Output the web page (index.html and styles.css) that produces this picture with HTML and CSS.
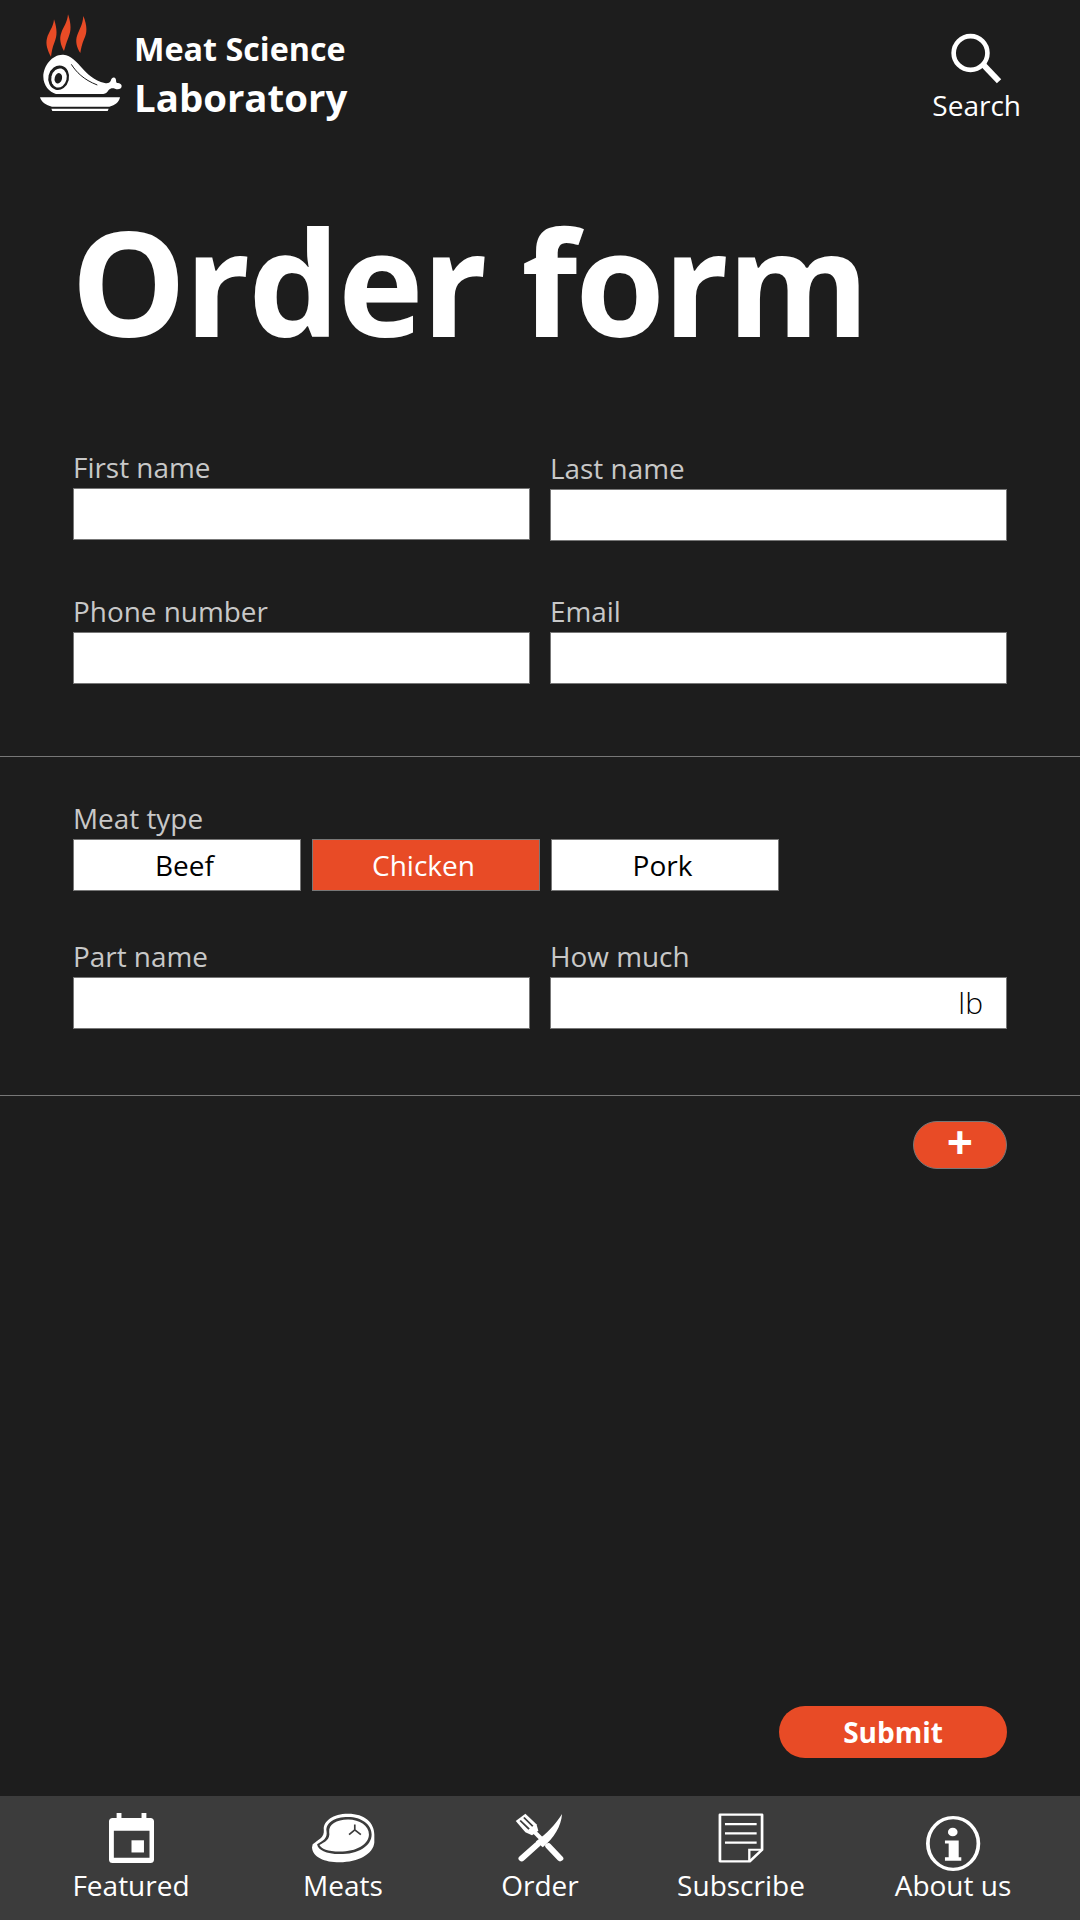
FILE: index.html
```html
<!DOCTYPE html>
<html lang="en">
<head>
  <meta charset="UTF-8" />
  <meta name="viewport" content="width=device-width, initial-scale=1.0"/>
  <title>Order form</title>
  <link rel="stylesheet" href="styles.css">
</head>
<body>
  <header class="topbar">
    <div class="brand">
      <svg class="logo" viewBox="120 36 255 300" aria-hidden="true">
        <path fill="#e84b26" d="M162 55C172 85 172 105 163 125 157 140 155 152 153 167 143 150 136 130 141 112 146 92 160 80 162 55Z"/>
        <path fill="#e84b26" d="M204 40C214 70 214 90 205 110 199 124 196 136 192 150 182 132 177 112 184 95 190 78 202 65 204 40Z"/>
        <path fill="#e84b26" d="M250 45C262 75 262 95 252 115 246 130 243 142 241 156 230 140 225 120 232 102 238 85 248 72 250 45Z"/>
        <path fill="#fff" d="M190 161c24 2 40 22 56 40 16 18 36 38 68 45 9 2 14 0 18-6 1-7 7-13 12-10 6 3 3 12 6 15 5 1 15 2 15 10 0 9-11 12-20 8-8-3-14-1-19 4-4 7-8 11-16 12H168c-20-6-38-26-38-52 0-34 28-68 60-66z"/>
        <path fill="none" stroke="#1d1d1d" stroke-width="3" d="M214 190c14 22 36 46 78 62"/>
        <ellipse cx="176" cy="230" rx="31" ry="37" fill="#1d1d1d" transform="rotate(14 176 230)"/>
        <ellipse cx="177" cy="231" rx="23" ry="29" fill="#fff" transform="rotate(14 177 231)"/>
        <ellipse cx="175" cy="232" rx="11" ry="16" fill="#1d1d1d" transform="rotate(14 175 232)"/>
        <path fill="#fff" d="M120 289h240c-3 14-14 24-32 28H156c-18-4-32-14-36-28zM154 323h172l-3 7H157z"/>
      </svg>
      <div class="brand-text">
        <span class="brand-top">Meat Science</span>
        <span class="brand-bottom">Laboratory</span>
      </div>
    </div>
    <div class="search">
      <svg class="search-icon" viewBox="214 100 154 156" aria-hidden="true">
        <circle cx="273" cy="160" r="51" fill="none" stroke="#fff" stroke-width="14"/>
        <path d="M313 197l46 48" fill="none" stroke="#fff" stroke-width="18"/>
      </svg>
      <span>Search</span>
    </div>
  </header>

  <h1 class="page-title">Order form</h1>

  <section class="section">
    <div class="row row-first">
      <div class="field"><label>First name</label><input type="text"></div>
      <div class="field"><label>Last name</label><input type="text"></div>
    </div>
    <div class="row">
      <div class="field"><label>Phone number</label><input type="text"></div>
      <div class="field"><label>Email</label><input type="text"></div>
    </div>
  </section>

  <section class="section section-meat">
    <div class="field">
      <label>Meat type</label>
      <div class="types">
        <button class="type">Beef</button>
        <button class="type active">Chicken</button>
        <button class="type">Pork</button>
      </div>
    </div>
    <div class="row">
      <div class="field"><label>Part name</label><input type="text"></div>
      <div class="field">
        <label>How much</label>
        <div class="amount"><input type="text"><span class="unit">lb</span></div>
      </div>
    </div>
  </section>

  <div class="add-line"><button class="add-btn">+</button></div>

  <div class="submit-line"><button class="submit-btn">Submit</button></div>

  <nav class="tabbar">
    <a class="tab">
      <svg class="tab-icon icon-featured" viewBox="311 98 130 152" preserveAspectRatio="none" aria-hidden="true">
        <path fill="#fff" fill-rule="evenodd" d="M333 98h14v15h58V98h14v15h12c6 0 10 4 10 10v117c0 6-4 10-10 10H321c-6 0-10-4-10-10V123c0-6 4-10 10-10h12zM325 152v82h103v-82z"/>
        <rect x="376" y="181" width="36" height="37" fill="#fff"/>
      </svg>
      <span>Featured</span>
    </a>
    <a class="tab">
      <svg class="tab-icon icon-meats" viewBox="900 100 190 152" preserveAspectRatio="none" aria-hidden="true">
        <path fill="#fff" d="M905 195C925 178 940 175 938 150 936 125 965 102 1010 102 1060 102 1088 130 1088 165V190C1085 225 1040 250 985 250 940 250 905 235 903 205Z"/>
        <path fill="#3c3c3c" d="M918 195C935 185 950 178 946 155 943 130 970 112 1010 112 1050 112 1080 135 1080 165 1080 200 1040 225 985 225 945 225 920 212 918 195Z"/>
        <path fill="#fff" d="M925 197C940 190 958 180 954 158 952 135 975 120 1010 120 1045 120 1072 140 1072 165 1072 195 1035 217 985 217 950 217 930 208 925 197Z"/>
        <path fill="none" stroke="#3c3c3c" stroke-width="5" d="M1030 135V151M1030 151L1013 166M1030 151L1048 166"/>
      </svg>
      <span>Meats</span>
    </a>
    <a class="tab">
      <svg class="tab-icon icon-order" viewBox="90 100 135 155" preserveAspectRatio="none" aria-hidden="true">
        <path fill="#fff" d="M92 125L118 102 148 135 153 155 136 169 118 160Z"/>
        <path fill="none" stroke="#3c3c3c" stroke-width="5" d="M104 123L128 150M114 114L138 141"/>
        <path fill="none" stroke="#fff" stroke-width="12" d="M142 158L168 188"/>
        <path fill="none" stroke="#fff" stroke-width="17" stroke-linecap="round" d="M180 202L212 241"/>
        <path fill="#fff" d="M217 103C215 140 195 178 165 206L146 188C175 165 200 135 217 103Z"/>
        <path fill="none" stroke="#fff" stroke-width="17" stroke-linecap="round" d="M150 198L108 241"/>
      </svg>
      <span>Order</span>
    </a>
    <a class="tab">
      <svg class="tab-icon icon-subscribe" viewBox="625 100 119 152" preserveAspectRatio="none" aria-hidden="true">
        <path fill="none" stroke="#fff" stroke-width="7" stroke-linejoin="round" d="M630 105H739V212L707 247H630Z"/>
        <path fill="none" stroke="#fff" stroke-width="7" d="M643 134H725M643 162H725M643 190H725"/>
        <path fill="none" stroke="#fff" stroke-width="6" d="M739 212H706V247"/>
      </svg>
      <span>Subscribe</span>
    </a>
    <a class="tab">
      <svg class="tab-icon icon-about" viewBox="1162 106 148 168" preserveAspectRatio="none" aria-hidden="true">
        <ellipse cx="1235" cy="190" rx="68" ry="79" fill="none" stroke="#fff" stroke-width="10"/>
        <circle cx="1234" cy="155" r="13" fill="#fff"/>
        <path fill="#fff" d="M1213 181H1250V232H1257V243H1213V232H1223V190H1213Z"/>
      </svg>
      <span>About us</span>
    </a>
  </nav>
</body>
</html>
```

FILE: styles.css
```css
* { box-sizing: border-box; margin: 0; padding: 0; }

body {
  font-family: "Open Sans", sans-serif;
  background: #1d1d1d;
  color: #fff;
  height: 1920px;
  display: flex;
  flex-direction: column;
  overflow: hidden;
}

.topbar {
  height: 130px;
  display: flex;
  justify-content: space-between;
  padding: 13px 59px 0 40px;
}

.brand {
  display: flex;
  gap: 9px;
}

.logo {
  width: 85px;
  height: 100px;
}

.brand-text {
  display: flex;
  flex-direction: column;
  font-weight: 700;
  padding-top: 14px;
}

.brand-top {
  font-size: 32.3px;
  line-height: 42px;
}

.brand-bottom {
  font-size: 38.4px;
  line-height: 57px;
}

.search {
  display: flex;
  flex-direction: column;
  align-items: center;
  font-size: 28px;
  padding-top: 20px;
  line-height: 36px;
}

.search-icon {
  width: 51px;
  height: 52px;
  margin-bottom: 2px;
}

.page-title {
  font-size: 145px;
  font-weight: 700;
  line-height: 200px;
  padding-left: 71px;
  margin-top: 51px;
  letter-spacing: -2px;
}

.section {
  padding: 72px 73px 0;
  height: 376px;
  border-bottom: 1px solid #777;
}

.section-meat {
  padding-top: 47px;
  height: 339px;
}

.row {
  display: grid;
  grid-template-columns: 457px 457px;
  gap: 20px;
  margin-bottom: 57px;
}

.row-first {
  margin-bottom: 56px;
}

.row-first .field:last-child {
  margin-top: 1px;
}

.field label {
  display: block;
  font-size: 27.9px;
  line-height: 28px;
  padding-bottom: 7px;
  color: #c8c8c8;
}

.field input {
  display: block;
  width: 100%;
  height: 52px;
  border: 1px solid #777;
  background: #fff;
  outline: none;
}

.types {
  display: flex;
  gap: 11px;
  margin-bottom: 51px;
}

.type {
  width: 228px;
  height: 52px;
  border: 1px solid #777;
  background: #fff;
  color: #000;
  font-family: inherit;
  font-size: 28px;
  padding-right: 5px;
}

.type.active {
  background: #e84b26;
  color: #fff;
}

.amount {
  position: relative;
}

.unit {
  position: absolute;
  right: 24px;
  top: 7px;
  font-size: 30px;
  font-weight: 300;
  line-height: 38px;
  color: #000;
}

.add-line {
  display: flex;
  justify-content: flex-end;
  padding: 25px 73px 0;
}

.add-btn {
  width: 94px;
  height: 48px;
  border: 1px solid #777;
  border-radius: 24px;
  background: #e84b26;
  color: #fff;
  font-family: inherit;
  font-size: 46px;
  font-weight: 700;
  line-height: 36px;
  padding-bottom: 8px;
}

.submit-line {
  flex: 1;
  display: flex;
  justify-content: flex-end;
  align-items: flex-end;
  padding: 0 73px 38px;
}

.submit-btn {
  width: 228px;
  height: 52px;
  border: none;
  border-radius: 26px;
  background: #e84b26;
  color: #fff;
  font-family: inherit;
  font-size: 28px;
  font-weight: 700;
}

.tabbar {
  height: 124px;
  background: #3c3c3c;
  display: grid;
  grid-template-columns: 262px 162px 232px 170px 254px;
}

.tab {
  display: flex;
  flex-direction: column;
  align-items: center;
  gap: 4px;
  font-size: 28px;
  line-height: 36px;
  padding-top: 17px;
}

.tab-icon {
  height: 50px;
}

.icon-featured { width: 45px; }
.icon-meats { width: 64px; }
.icon-order { width: 50px; }
.icon-subscribe { width: 46px; }

.icon-about {
  width: 55px;
  height: 55px;
  margin-top: 3px;
  margin-bottom: -8px;
}
```
